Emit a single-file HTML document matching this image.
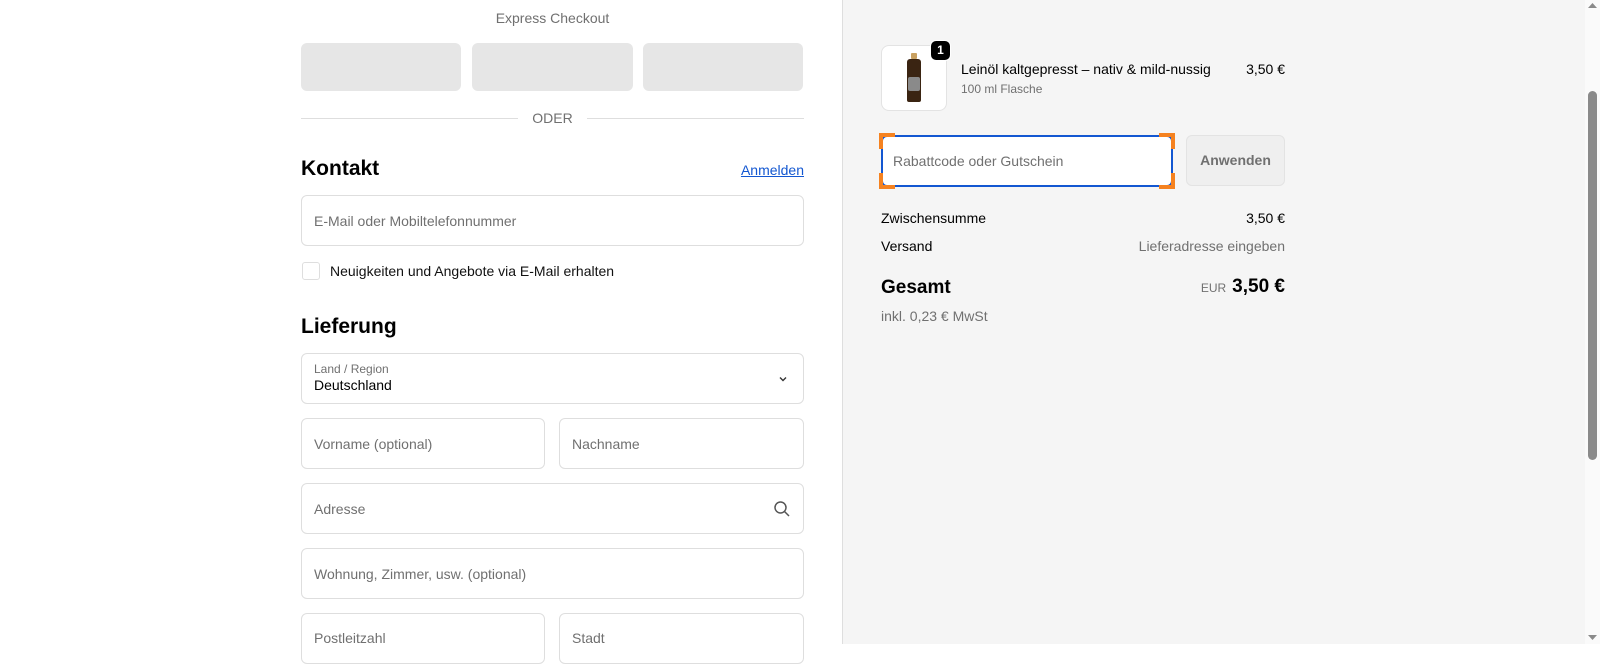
<!DOCTYPE html>
<html><head><meta charset="utf-8"><style>
*{box-sizing:border-box;margin:0;padding:0}
body{width:1600px;height:644px;overflow:hidden;background:#fff;font-family:"Liberation Sans",Arial,sans-serif;position:relative;color:#000}
.a{position:absolute}
.btn{background:#e6e6e6;border-radius:6px;height:48px;top:43px}
.f{border:1px solid #dedede;border-radius:6px;background:#fff;height:51px;font-size:14px;color:#707070;padding-left:12px;display:flex;align-items:center}
.t{white-space:nowrap}
</style></head><body>
<div class="a t" style="left:301px;width:503px;top:10px;text-align:center;font-size:14px;color:#707070">Express Checkout</div>
<div class="a btn" style="left:301px;width:160px"></div>
<div class="a btn" style="left:472px;width:161px"></div>
<div class="a btn" style="left:643px;width:160px"></div>
<div class="a" style="left:301px;width:217px;top:118px;border-top:1px solid #dedede"></div>
<div class="a" style="left:587px;width:217px;top:118px;border-top:1px solid #dedede"></div>
<div class="a t" style="left:518px;width:69px;top:110px;text-align:center;font-size:14px;color:#707070">ODER</div>
<div class="a t" style="left:301px;top:157px;font-size:21px;font-weight:bold">Kontakt</div>
<div class="a t" style="right:796px;top:162px;font-size:14px;color:#1357d1;text-decoration:underline">Anmelden</div>
<div class="a f" style="left:301px;width:503px;top:195px">E-Mail oder Mobiltelefonnummer</div>
<div class="a" style="left:302px;top:262px;width:18px;height:18px;border:1px solid #dedede;border-radius:3px"></div>
<div class="a t" style="left:330px;top:263px;font-size:14px;color:#111">Neuigkeiten und Angebote via E-Mail erhalten</div>
<div class="a t" style="left:301px;top:315px;font-size:21px;font-weight:bold">Lieferung</div>
<div class="a f" style="left:301px;width:503px;top:353px;display:block;padding-top:8px">
<div style="font-size:12px;color:#707070">Land / Region</div><div style="font-size:14px;color:#000;margin-top:1px">Deutschland</div>
<svg class="a" style="right:14px;top:19px" width="12" height="12" viewBox="0 0 12 12"><path d="M3 4.5l3 3 3-3" fill="none" stroke="#333" stroke-width="1.4"/></svg></div>
<div class="a f" style="left:301px;width:244px;top:418px">Vorname (optional)</div>
<div class="a f" style="left:559px;width:245px;top:418px">Nachname</div>
<div class="a f" style="left:301px;width:503px;top:483px">Adresse
<svg class="a" style="right:12px;top:16px" width="18" height="18" viewBox="0 0 18 18"><circle cx="7.5" cy="7.5" r="5.5" fill="none" stroke="#555" stroke-width="1.5"/><path d="M11.5 11.5l4.5 4.5" stroke="#555" stroke-width="1.5"/></svg></div>
<div class="a f" style="left:301px;width:503px;top:548px">Wohnung, Zimmer, usw. (optional)</div>
<div class="a f" style="left:301px;width:244px;top:613px;height:51px;align-items:flex-start;padding-top:16px">Postleitzahl</div>
<div class="a f" style="left:559px;width:245px;top:613px;height:51px;align-items:flex-start;padding-top:16px">Stadt</div>

<div class="a" style="left:842px;top:0;width:743px;height:644px;background:#f5f5f5;border-left:1px solid #dedede"></div>
<div class="a" style="left:881px;top:45px;width:66px;height:66px;background:#fff;border:1px solid #e3e3e3;border-radius:8px"></div>
<div class="a" style="left:907px;top:53px;width:14px;height:49px">
<div style="width:6px;height:6px;margin:0 auto;background:#c8a060;border-radius:1px"></div>
<div style="width:14px;height:43px;background:#3a2412;border-radius:3px 3px 2px 2px;position:relative"><div style="position:absolute;top:18px;left:1px;width:12px;height:14px;background:#8a8a8a;border-radius:2px"></div></div></div>
<div class="a" style="left:930px;top:40px;width:21px;height:21px;background:#000;border-radius:6px;color:#fff;font-size:12px;font-weight:bold;text-align:center;line-height:19px;border:1px solid #fff">1</div>
<div class="a t" style="left:961px;top:61px;font-size:14px">Leinöl kaltgepresst – nativ &amp; mild-nussig</div>
<div class="a t" style="left:961px;top:82px;font-size:12px;color:#707070">100 ml Flasche</div>
<div class="a t" style="right:315px;top:61px;font-size:14px">3,50 €</div>
<div class="a" style="left:881px;top:135px;width:292px;height:52px;background:#fff;border:2px solid #1357d1;border-radius:6px;font-size:14px;color:#707070;padding:16px 0 0 10px">Rabattcode oder Gutschein</div>
<div class="a" style="left:879px;top:133px;width:16px;height:4px;background:#f58220"></div>
<div class="a" style="left:879px;top:133px;width:4px;height:16px;background:#f58220"></div>
<div class="a" style="left:1159px;top:133px;width:16px;height:4px;background:#f58220"></div>
<div class="a" style="left:1171px;top:133px;width:4px;height:16px;background:#f58220"></div>
<div class="a" style="left:879px;top:185px;width:16px;height:4px;background:#f58220"></div>
<div class="a" style="left:879px;top:173px;width:4px;height:16px;background:#f58220"></div>
<div class="a" style="left:1159px;top:185px;width:16px;height:4px;background:#f58220"></div>
<div class="a" style="left:1171px;top:173px;width:4px;height:16px;background:#f58220"></div>
<div class="a" style="left:1186px;top:135px;width:99px;height:51px;background:#efefef;border:1px solid #e3e3e3;border-radius:6px;font-size:14px;font-weight:bold;color:#707070;text-align:center;line-height:49px">Anwenden</div>
<div class="a t" style="left:881px;top:210px;font-size:14px">Zwischensumme</div>
<div class="a t" style="right:315px;top:210px;font-size:14px">3,50 €</div>
<div class="a t" style="left:881px;top:238px;font-size:14px">Versand</div>
<div class="a t" style="right:315px;top:238px;font-size:14px;color:#707070">Lieferadresse eingeben</div>
<div class="a t" style="left:881px;top:277px;font-size:19px;font-weight:bold">Gesamt</div>
<div class="a t" style="right:315px;top:276px;font-size:19px;font-weight:bold"><span style="font-size:12px;font-weight:normal;color:#707070;margin-right:6px">EUR</span>3,50 €</div>
<div class="a t" style="left:881px;top:308px;font-size:14px;color:#707070">inkl. 0,23 € MwSt</div>

<div class="a" style="left:1585px;top:0;width:15px;height:644px;background:#fafafa"></div>
<div class="a" style="left:1588px;top:91px;width:9px;height:369px;background:#8a8a8a;border-radius:5px"></div>
<svg class="a" style="left:1588px;top:3px" width="9" height="6"><path d="M0 5h9L4.5 0z" fill="#8a8a8a"/></svg>
<svg class="a" style="left:1588px;top:635px" width="9" height="6"><path d="M0 0h9L4.5 5z" fill="#8a8a8a"/></svg>
</body></html>
